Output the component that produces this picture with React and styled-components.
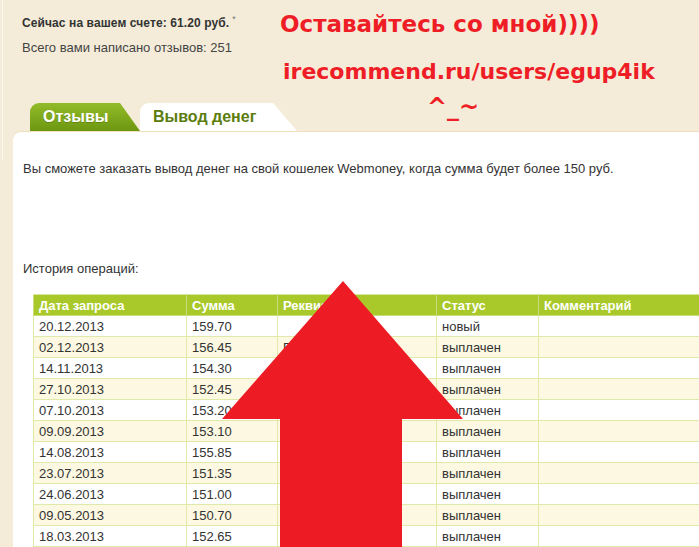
import React from "react";
import styled, { createGlobalStyle } from "styled-components";

const Global = createGlobalStyle`
  html, body { margin: 0; padding: 0; background: #f4ecd9; }
  body { font-family: "Liberation Sans", Arial, sans-serif; }
`;

const Page = styled.div`
  position: relative;
  width: 699px;
  height: 547px;
  overflow: hidden;
  background: #f4ecd9;
  color: #333;
  &::before {
    content: "";
    position: absolute;
    left: 2px;
    top: 0;
    width: 1px;
    height: 160px;
    background: #fbf8ee;
  }
`;

const Header = styled.div`
  padding: 12px 0 0 22px;
  line-height: 15px;
`;

const Balance = styled.div`
  font-size: 12px;
  font-weight: bold;
  letter-spacing: 0.1px;
  color: #333;
  sup {
    font-weight: normal;
    font-size: 9px;
    color: #777;
    margin-left: 3px;
  }
`;

const Count = styled.div`
  margin-top: 9px;
  font-size: 13px;
  color: #444;
`;

const Tabs = styled.div`
  display: flex;
  align-items: flex-end;
  margin-top: 48px;
  padding-left: 30px;
  height: 28px;
`;

const Tab = styled.div`
  height: 28px;
  box-sizing: border-box;
  width: ${(p) => (p.$active ? 157 : 110)}px;
  padding: 4px 0 0 13px;
  font-size: 16px;
  font-weight: bold;
  line-height: 19px;
  border-top-left-radius: 9px;
  color: ${(p) => (p.$active ? "#5c7d0e" : "#fff")};
  background: ${(p) =>
    p.$active ? "#fff" : "linear-gradient(#93bb2a, #6c9710)"};
  clip-path: ${(p) =>
    p.$active
      ? "polygon(0 0, calc(100% - 24px) 0, 100% 100%, 0 100%)"
      : "polygon(0 0, calc(100% - 20px) 0, 100% 100%, 0 100%)"};
  text-shadow: ${(p) => (p.$active ? "none" : "0 1px 0 rgba(60,90,0,0.4)")};
`;

const Panel = styled.div`
  margin-left: 13px;
  background: #fff;
  border-top-left-radius: 8px;
  border-top: 1px solid #efdfbd;
  padding: 0 0 0 10px;
  height: 420px;
  font-size: 13px;
  line-height: 15px;
`;

const Notice = styled.p`
  margin: 29px 0 0;
  color: #333;
`;

const HistoryLabel = styled.p`
  margin: 85px 0 0;
  color: #333;
`;

const Table = styled.table`
  margin: 18px 0 0 10px;
  border-collapse: collapse;
  width: 760px;
  table-layout: fixed;
  font-size: 13px;
`;

const Th = styled.th`
  background: #a9c92b;
  color: #fff;
  font-size: 13px;
  font-weight: bold;
  text-align: left;
  height: 20px;
  padding: 0 5px;
  border: 1px solid #c8dc7c;
  border-top: 1px solid #d8e6a0;
  white-space: nowrap;
  overflow: hidden;
`;

const Row = styled.tr`
  background: ${(p) => (p.$odd ? "#fcf8e1" : "#fff")};
`;

const Td = styled.td`
  height: 20px;
  padding: 0 5px;
  border: 1px solid #dfeaa9;
  color: #333;
  white-space: nowrap;
  overflow: hidden;
`;

const Annotation = styled.div`
  position: absolute;
  color: #ee1d26;
  font-family: "DejaVu Sans", sans-serif;
  font-weight: bold;
  white-space: nowrap;
  left: ${(p) => p.$x}px;
  top: ${(p) => p.$y}px;
  font-size: ${(p) => p.$size}px;
  line-height: 1;
`;

const Arrow = styled.svg`
  position: absolute;
  left: 0;
  top: 0;
  pointer-events: none;
`;

const rows = [
  ["20.12.2013", "159.70", "", "новый"],
  ["02.12.2013", "156.45", "R3", "выплачен"],
  ["14.11.2013", "154.30", "R3", "выплачен"],
  ["27.10.2013", "152.45", "R3", "выплачен"],
  ["07.10.2013", "153.20", "R3", "выплачен"],
  ["09.09.2013", "153.10", "R3", "выплачен"],
  ["14.08.2013", "155.85", "R3", "выплачен"],
  ["23.07.2013", "151.35", "R3", "выплачен"],
  ["24.06.2013", "151.00", "R3", "выплачен"],
  ["09.05.2013", "150.70", "R3", "выплачен"],
  ["18.03.2013", "152.65", "R3", "выплачен"],
];

export default function App() {
  return (
    <Page>
      <Global />
      <Header>
        <Balance>
          Сейчас на вашем счете: 61.20 руб.<sup>*</sup>
        </Balance>
        <Count>Всего вами написано отзывов: 251</Count>
      </Header>
      <Tabs>
        <Tab>Отзывы</Tab>
        <Tab $active>Вывод денег</Tab>
      </Tabs>
      <Panel>
        <Notice>
          Вы сможете заказать вывод денег на свой кошелек Webmoney, когда сумма
          будет более 150 руб.
        </Notice>
        <HistoryLabel>История операций:</HistoryLabel>
        <Table>
          <colgroup>
            <col style={{ width: 153 }} />
            <col style={{ width: 91 }} />
            <col style={{ width: 159 }} />
            <col style={{ width: 102 }} />
            <col />
          </colgroup>
          <thead>
            <tr>
              <Th>Дата запроса</Th>
              <Th>Сумма</Th>
              <Th>Реквизиты</Th>
              <Th>Статус</Th>
              <Th>Комментарий</Th>
            </tr>
          </thead>
          <tbody>
            {rows.map((r, i) => (
              <Row key={r[0]} $odd={i % 2 === 1}>
                <Td>{r[0]}</Td>
                <Td>{r[1]}</Td>
                <Td>{r[2]}</Td>
                <Td>{r[3]}</Td>
                <Td></Td>
              </Row>
            ))}
          </tbody>
        </Table>
      </Panel>
      <Annotation $x={280} $y={13} $size={23}>
        Оставайтесь со мной))))
      </Annotation>
      <Annotation $x={283} $y={61} $size={22}>
        irecommend.ru/users/egup4ik
      </Annotation>
      <Annotation $x={427} $y={95} $size={24}>
        ^_~
      </Annotation>
      <Arrow width="699" height="547" viewBox="0 0 699 547">
        <polygon
          points="343,281 463,419 402,419 402,547 280,547 280,419 222,419"
          fill="#ed1c24"
        />
      </Arrow>
    </Page>
  );
}
